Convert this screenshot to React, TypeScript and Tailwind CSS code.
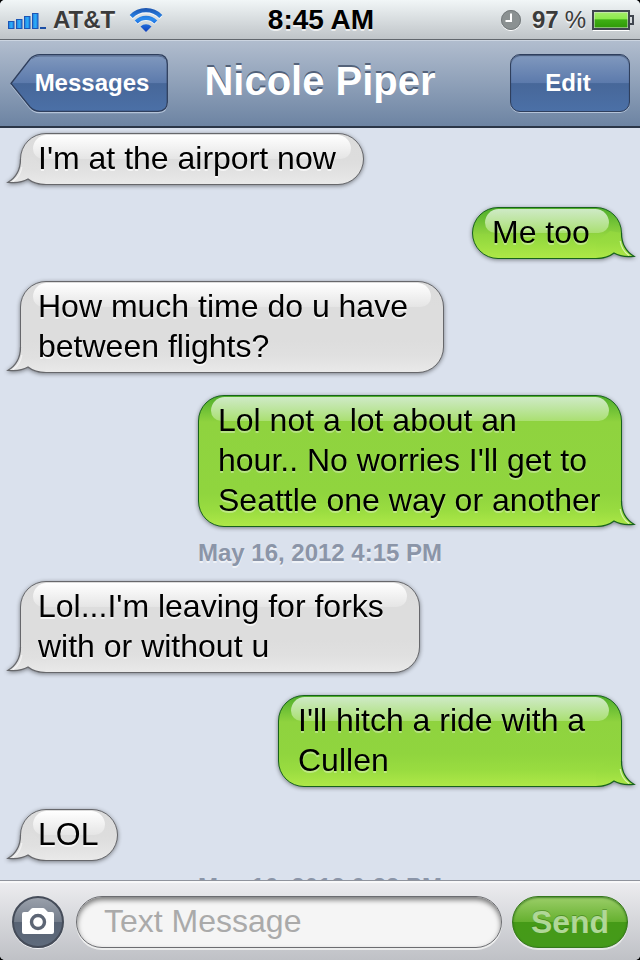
import React, { useState } from 'react';

type Message = {
  kind: 'in' | 'out' | 'time';
  text: string;
  width?: string;
};

const messages: Message[] = [
  { kind: 'in', text: "I'm at the airport now", width: 'w-[344px]' },
  { kind: 'out', text: 'Me too', width: 'w-[150px]' },
  { kind: 'in', text: 'How much time do u have\nbetween flights?', width: 'w-[424px]' },
  { kind: 'out', text: "Lol not a lot about an\nhour.. No worries I'll get to\nSeattle one way or another", width: 'w-[424px]' },
  { kind: 'time', text: 'May 16, 2012 4:15 PM' },
  { kind: 'in', text: "Lol...I'm leaving for forks\nwith or without u", width: 'w-[400px]' },
  { kind: 'out', text: "I'll hitch a ride with a\nCullen", width: 'w-[344px]' },
  { kind: 'in', text: 'LOL', width: 'w-[98px]' },
  { kind: 'time', text: 'May 16, 2012 6:23 PM' },
];

function Tail({ out }: { out: boolean }) {
  const id = out ? 'tail-out' : 'tail-in';
  return (
    <svg
      viewBox="0 0 40 32"
      className={out ? 'absolute -right-[15px] -bottom-px h-8 w-10 -scale-x-100' : 'absolute -left-[15px] -bottom-px h-8 w-10'}
      aria-hidden="true"
    >
      <defs>
        <linearGradient id={id} x1="0" y1="0" x2="0" y2="32" gradientUnits="userSpaceOnUse">
          <stop offset="0" stopColor={out ? '#90d53e' : '#dddddd'} />
          <stop offset="0.5" stopColor={out ? '#99dc40' : '#e0e0e0'} />
          <stop offset="1" stopColor={out ? '#aee847' : '#e9e9e9'} />
        </linearGradient>
      </defs>
      <path d="M14.500 6C14.500 17 11 24 2 29.300C9 30 17 29 22 26C27 30 32 31.500 40 31.500V16L26 4Z" fill={`url(#${id})`} />
      <path d="M15.800 14C15 20 12 25 7 28.500" fill="none" stroke="#fff" strokeOpacity="0.6" strokeWidth="1.200" />
      <path
        d="M14.500 6C14.500 17 11 24 2 29.300C9 30 17 29 22 26C27 30 32 31.500 40 31.500"
        fill="none"
        stroke={out ? '#17631c' : '#66676b'}
        strokeWidth="1.200"
      />
    </svg>
  );
}

function Bubble({ message }: { message: Message }) {
  const out = message.kind === 'out';
  return (
    <li className={out ? 'flex justify-end py-[11px] pr-[18px]' : 'flex py-[11px] pl-5'}>
      <div
        className={`relative max-w-full rounded-[26px] border pt-1 pb-1.5 drop-shadow-[0_1px_2px_rgba(0,0,0,0.45)] ${message.width} ${
          out
            ? 'border-[#17631c] bg-[linear-gradient(to_bottom,#4fae2b_0px,#8fd33f_26px,#90d53e_calc(100%-32px),#99dc40_calc(100%-16px),#aee847_100%)] pl-[19px]'
            : 'border-[#66676b] bg-[linear-gradient(to_bottom,#dcdcdc_0px,#dddddd_26px,#dddddd_calc(100%-32px),#e0e0e0_calc(100%-16px),#e9e9e9_100%)] pl-[17px]'
        }`}
      >
        <Tail out={out} />
        <div
          className={`absolute inset-x-3 top-px h-6 rounded-t-[16px] rounded-b-[12px] ${
            out ? 'bg-linear-to-b from-[#cfeac6] to-[#aadf70]' : 'bg-linear-to-b from-white to-[#e5e5e5]'
          }`}
        />
        <p
          className={`relative text-[32px] leading-10 whitespace-pre text-black ${
            out ? '[text-shadow:0_2px_0_rgba(255,255,255,0.35)]' : '[text-shadow:0_2px_0_rgba(255,255,255,0.7)]'
          }`}
        >
          {message.text}
        </p>
      </div>
    </li>
  );
}

function StatusBar() {
  return (
    <div className="grid h-10 shrink-0 grid-cols-[1fr_auto_1fr] items-center border-b border-[#62676d] bg-linear-to-b from-[#f1f6f7] to-[#bfc4c8] pr-1.5 pl-2 font-bold text-[#3b3b3b] [text-shadow:0_2px_0_rgba(255,255,255,0.7)]">
      <div className="flex items-center gap-1.5 text-2xl leading-8">
        <svg viewBox="0 0 39 18" className="h-[18px] w-[39px]" aria-label="Signal strength">
          <defs>
            <linearGradient id="signal" x1="0" y1="0" x2="1" y2="0">
              <stop offset="0" stopColor="#2479dc" />
              <stop offset="0.5" stopColor="#2bb0fa" />
              <stop offset="1" stopColor="#2479dc" />
            </linearGradient>
          </defs>
          <g fill="url(#signal)" stroke="#1c55b5" strokeWidth="1">
            <rect x="0.500" y="10.500" width="5.500" height="7" />
            <rect x="8.500" y="8.500" width="5.500" height="9" />
            <rect x="16.500" y="5.500" width="5.500" height="12" />
            <rect x="24.500" y="2.500" width="5.500" height="15" />
          </g>
          <rect x="32" y="16" width="6" height="2" fill="#1c4fa5" />
        </svg>
        <span>AT&amp;T</span>
        <svg viewBox="0 0 34 26" className="ml-2 h-[26px] w-[34px]" aria-label="Wi-Fi">
          <defs>
            <linearGradient id="wifi" x1="0" y1="0" x2="0" y2="24" gradientUnits="userSpaceOnUse">
              <stop offset="0" stopColor="#1c4fa8" />
              <stop offset="0.500" stopColor="#2b8cf0" />
              <stop offset="1" stopColor="#1244c0" />
            </linearGradient>
          </defs>
          <g fill="none" stroke="#fff" strokeOpacity="0.7" strokeWidth="4">
            <path d="M2.200 10.800A20.500 20.500 0 0 1 31.800 10.800" />
            <path d="M7.200 16.200A13.800 13.800 0 0 1 26.800 16.200" />
          </g>
          <g fill="none" stroke="url(#wifi)" strokeWidth="4.200">
            <path d="M2.200 9.500A20.500 20.500 0 0 1 31.800 9.500" />
            <path d="M7.200 15A13.800 13.800 0 0 1 26.800 15" />
          </g>
          <path d="M11.500 19.500A8 8 0 0 1 22.500 19.500L17 25Z" fill="url(#wifi)" />
        </svg>
      </div>
      <time className="text-[28px] leading-8 text-black">8:45 AM</time>
      <div className="flex items-center justify-end text-2xl leading-8">
        <svg viewBox="0 0 22 22" className="mr-2.5 h-[22px] w-[22px]" aria-label="Alarm">
          <circle cx="11" cy="12" r="10" fill="#fff" />
          <circle cx="11" cy="11" r="10" fill="#8b9192" />
          <circle cx="11" cy="11" r="9.500" fill="none" stroke="#757b7d" />
          <path d="M11 4.500V12H5.500" fill="none" stroke="#fff" strokeWidth="2" />
        </svg>
        <span>97</span>
        <span className="mr-1.5 ml-1.5 font-normal">%</span>
        <svg viewBox="0 0 42 22" className="h-[22px] w-[42px]" aria-label="Battery">
          <defs>
            <linearGradient id="battery" x1="0" y1="0" x2="0" y2="1">
              <stop offset="0" stopColor="#a4ea6a" />
              <stop offset="0.400" stopColor="#8ce84c" />
              <stop offset="0.500" stopColor="#3fae14" />
              <stop offset="1" stopColor="#2f9a08" />
            </linearGradient>
          </defs>
          <path d="M1 21.500H37" stroke="#fff" />
          <rect x="1" y="2" width="36" height="18" fill="#dfe5e0" stroke="#40464f" strokeWidth="2" />
          <rect x="2.500" y="3.500" width="33" height="15" fill="url(#battery)" />
          <path d="M38 7H41V15H38" fill="none" stroke="#40464f" strokeWidth="2" />
        </svg>
      </div>
    </div>
  );
}

function NavBar() {
  return (
    <header className="grid h-22 shrink-0 grid-cols-[1fr_auto_1fr] items-center border-t border-b-2 border-t-[#ccd5e1] border-b-[#2b3647] bg-linear-to-b from-[#b1bdce] to-[#6d84a3] px-2.5 pb-0.5 font-bold text-white [text-shadow:0_-2px_0_rgba(35,50,75,0.6)]">
      <button type="button" className="relative h-[58px] w-[158px] justify-self-start pl-1.5 text-2xl">
        <svg viewBox="0 0 158 60" className="absolute top-0 left-0 h-[60px] w-[158px]" aria-hidden="true">
          <defs>
            <linearGradient id="back" x1="0" y1="0" x2="0" y2="1">
              <stop offset="0" stopColor="#8199be" />
              <stop offset="0.500" stopColor="#5c7aac" />
              <stop offset="0.510" stopColor="#476799" />
              <stop offset="1" stopColor="#4b70a7" />
            </linearGradient>
          </defs>
          <path d="M1 30.500L20 54Q24 58.500 29 58.500H148Q157 58.500 157 49" fill="none" stroke="#b4c3d8" strokeWidth="1.500" />
          <path d="M1 29.500L20 5Q24 .7 30 .7H148Q157.300 .7 157.300 10V48Q157.300 57.300 148 57.300H30Q24 57.300 20 53Z" fill="url(#back)" stroke="#2f3f5d" strokeWidth="1.300" />
          <path d="M22 4.500Q25 2 30 2H148Q153 2 155 5" fill="none" stroke="#3c4d6e" strokeOpacity="0.6" />
        </svg>
        <span className="relative">Messages</span>
      </button>
      <h1 className="pb-1 text-[40px] leading-10">Nicole Piper</h1>
      <button
        type="button"
        className="h-[58px] w-30 justify-self-end rounded-[10px] border border-[#2f3f5d] bg-[linear-gradient(to_bottom,#8199be_0%,#5c7aac_50%,#476799_51%,#4b70a7_100%)] pr-1 text-2xl shadow-[inset_0_1px_1px_rgba(30,45,75,0.6),0_1px_0_#b4c3d8]"
      >
        Edit
      </button>
    </header>
  );
}

function Composer() {
  const [draft, setDraft] = useState('');

  return (
    <form
      onSubmit={e => e.preventDefault()}
      className="flex h-20 shrink-0 items-center border-t border-[#8f939c] bg-linear-to-b from-[#ededf0] to-[#bfc1c6] px-3 pt-0.5 shadow-[inset_0_2px_0_#f8f8f9]"
    >
      <button
        type="button"
        aria-label="Attach a photo"
        className="flex size-13 shrink-0 items-center justify-center rounded-full border-2 border-[#454c59] bg-[linear-gradient(to_bottom,#9aa0ab_0%,#737c8a_50%,#586374_51%,#5f6b7c_100%)] shadow-[0_1px_0_#f3f4f6]"
      >
        <svg viewBox="0 0 32 27" className="h-[27px] w-8" aria-hidden="true">
          <path d="M2 4H6L9 1Q10 0 11 0H21Q22 0 23 1L26 4H30Q32 4 32 6V24Q32 26 30 26H2Q0 26 0 24V6Q0 4 2 4Z" fill="#fff" />
          <circle cx="16" cy="14" r="6.500" fill="none" stroke="#5d6675" strokeWidth="3.400" />
        </svg>
      </button>
      <input
        type="text"
        aria-label="Text Message"
        placeholder="Text Message"
        value={draft}
        onChange={e => setDraft(e.target.value)}
        className="ml-3 h-13 min-w-0 flex-1 rounded-full border border-[#6b6c70] bg-[#f5f5f5] px-[27px] text-[32px] text-black shadow-[inset_0_3px_5px_rgba(0,0,0,0.5),0_2px_0_#eceded] outline-none placeholder:text-[#aaaaaa]"
      />
      <button
        type="submit"
        className="ml-2.5 h-13 w-29 shrink-0 rounded-full border border-[#35781b] bg-[linear-gradient(to_bottom,#9bce68_0%,#65b02f_50%,#459a17_51%,#459a1a_100%)] text-[32px] font-bold text-[#b0d797] shadow-[inset_0_1px_2px_rgba(20,80,10,0.6),0_2px_0_#e6e8e6] [text-shadow:0_-1px_0_rgba(30,90,10,0.4)]"
      >
        Send
      </button>
    </form>
  );
}

export default function App() {
  return (
    <div className="bg-black font-['Liberation_Sans',Arial,sans-serif]">
      <div className="flex h-screen flex-col overflow-hidden rounded-[5px] bg-[#dae1ed]">
        <StatusBar />
        <NavBar />
        <main className="min-h-0 flex-1 overflow-hidden">
          {/* the list rests slightly scrolled under the nav bar */}
          <ol className="-mt-1.5">
            {messages.map((message, i) =>
              message.kind === 'time' ? (
                <li key={i} className="pt-px pb-[3px] text-center text-2xl leading-7 font-bold text-[#8b95a8] [text-shadow:0_2px_0_rgba(255,255,255,0.6)]">
                  <time>{message.text}</time>
                </li>
              ) : (
                <Bubble key={i} message={message} />
              ),
            )}
          </ol>
        </main>
        <Composer />
      </div>
    </div>
  );
}
